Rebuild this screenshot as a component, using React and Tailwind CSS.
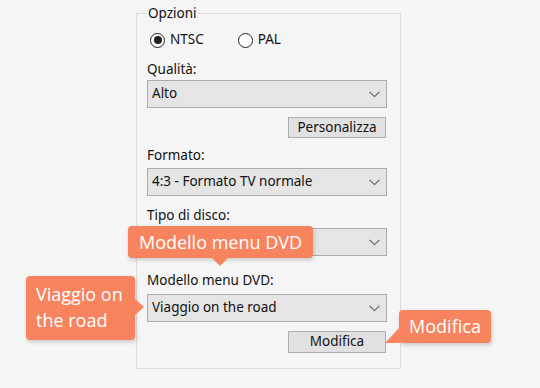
import React from "react";

function Chevron() {
  return (
    <svg width="11" height="7" viewBox="0 0 11 7" className="shrink-0">
      <polyline points="0.5,0.8 5.5,5.6 10.5,0.8" fill="none" stroke="#5a5a5a" strokeWidth="1.1" />
    </svg>
  );
}

function Select({ value }) {
  return (
    <div className="h-[28px] w-[240px] border border-[#adadad] bg-[#e5e5e5] flex items-center pl-[4px] pr-[6px]">
      <span className="flex-1 text-[13.5px] leading-none">{value}</span>
      <Chevron />
    </div>
  );
}

function Radio({ checked, label, className = "" }) {
  return (
    <div className={"flex items-center " + className}>
      <div className="w-[15px] h-[15px] rounded-full border-[1.5px] border-[#222] bg-white flex items-center justify-center">
        {checked && <div className="w-[8px] h-[8px] rounded-full bg-[#222]" />}
      </div>
      <span className="ml-[5px] text-[13.5px] leading-none">{label}</span>
    </div>
  );
}

function Button({ children, className = "" }) {
  return (
    <div className={"self-end mr-[2px] w-[98px] border border-[#adadad] bg-[#e1e1e1] flex items-center justify-center text-[13.5px] leading-none " + className}>
      {children}
    </div>
  );
}

export default function App() {
  return (
    <div
      className="relative w-[540px] h-[388px] overflow-hidden bg-[#f5f5f5] text-[#111]"
      style={{ fontFamily: '"Noto Sans", "DejaVu Sans", sans-serif' }}
    >
      <fieldset className="ml-[136px] mt-[5px] w-[265px] h-[364px] border-[1.5px] border-[#dcdcdc] pl-[10px] pr-[12px]">
        <legend className="h-[16px] leading-[16px] text-[13.5px] px-[1px]">Opzioni</legend>
        <div className="flex flex-col">
          <div className="mt-[9px] h-[20px] flex items-center">
            <Radio checked label="NTSC" className="ml-[3px]" />
            <Radio label="PAL" className="ml-[34px]" />
          </div>
          <div className="mt-[11px] h-[16px] leading-[16px] text-[13.5px]">Qualità:</div>
          <div className="mt-[3px]"><Select value="Alto" /></div>
          <Button className="mt-[9px] h-[21px]">Personalizza</Button>
          <div className="mt-[9px] h-[16px] leading-[16px] text-[13.5px]">Formato:</div>
          <div className="mt-[5px]"><Select value="4:3 - Formato TV normale" /></div>
          <div className="mt-[11px] h-[16px] leading-[16px] text-[13.5px]">Tipo di disco:</div>
          <div className="mt-[5px]"><Select value="" /></div>
          <div className="mt-[16px] h-[16px] leading-[16px] text-[13.5px]">Modello menu DVD:</div>
          <div className="mt-[6px]"><Select value="Viaggio on the road" /></div>
          <Button className="mt-[9px] h-[22px]">Modifica</Button>
        </div>
      </fieldset>

      {/* Callouts */}
      <div
        className="absolute left-[128px] top-[226px] w-[185px] h-[32px] rounded-[4px] bg-[#f7845f] text-white text-[18px] flex items-center justify-center shadow-[1px_2px_4px_rgba(0,0,0,0.18)]"
        style={{ fontFamily: '"Open Sans", "Noto Sans", sans-serif' }}
      >
        Modello menu DVD
        <svg className="absolute left-[83px] top-[31px]" width="18" height="10" viewBox="0 0 18 10">
          <polygon points="0,0 18,0 9,9" fill="#f7845f" />
        </svg>
      </div>

      <div
        className="absolute left-[26px] top-[276px] w-[109px] h-[64px] rounded-[4px] bg-[#f7845f] text-white text-[18px] leading-[26px] pl-[10px] pt-[5px] shadow-[1px_2px_4px_rgba(0,0,0,0.18)]"
        style={{ fontFamily: '"Open Sans", "Noto Sans", sans-serif' }}
      >
        Viaggio on
        <br />
        the road
        <svg className="absolute left-[108px] top-[22px]" width="11" height="18" viewBox="0 0 11 18">
          <polygon points="0,0 10,9 0,18" fill="#f7845f" />
        </svg>
      </div>

      <div
        className="absolute left-[399px] top-[310px] w-[92px] h-[33px] rounded-[4px] bg-[#f7845f] text-white text-[18px] flex items-center justify-center shadow-[1px_2px_4px_rgba(0,0,0,0.18)]"
        style={{ fontFamily: '"Open Sans", "Noto Sans", sans-serif' }}
      >
        Modifica
        <svg className="absolute left-[-14px] top-[17px]" width="15" height="16" viewBox="0 0 15 16">
          <polygon points="15,0 15,16 0,16" fill="#f7845f" />
        </svg>
      </div>
    </div>
  );
}
